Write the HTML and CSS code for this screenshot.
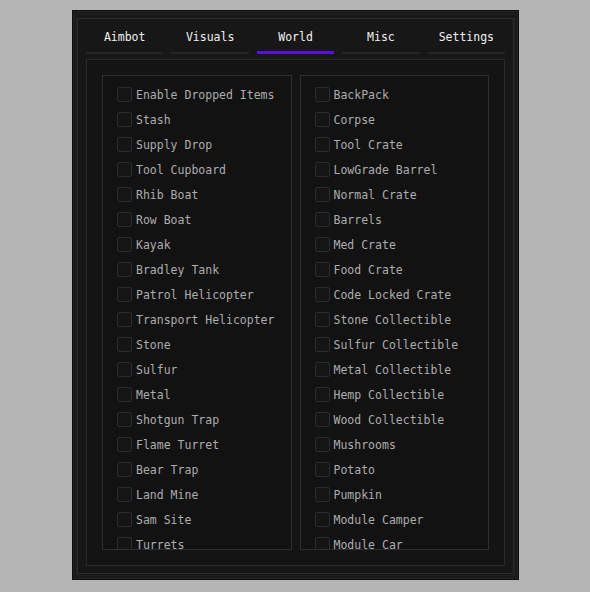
FILE: index.html
```html
<!DOCTYPE html>
<html>
<head>
<meta charset="utf-8">
<link rel="stylesheet" href="styles.css">
</head>
<body>
<div class="window">
  <div class="frame">
    <div class="tabs">
      <div class="tab">Aimbot</div>
      <div class="tab">Visuals</div>
      <div class="tab active">World</div>
      <div class="tab">Misc</div>
      <div class="tab">Settings</div>
    </div>
    <div class="content">
      <div class="group">
        <div class="item"><span class="box"></span><span>Enable Dropped Items</span></div>
        <div class="item"><span class="box"></span><span>Stash</span></div>
        <div class="item"><span class="box"></span><span>Supply Drop</span></div>
        <div class="item"><span class="box"></span><span>Tool Cupboard</span></div>
        <div class="item"><span class="box"></span><span>Rhib Boat</span></div>
        <div class="item"><span class="box"></span><span>Row Boat</span></div>
        <div class="item"><span class="box"></span><span>Kayak</span></div>
        <div class="item"><span class="box"></span><span>Bradley Tank</span></div>
        <div class="item"><span class="box"></span><span>Patrol Helicopter</span></div>
        <div class="item"><span class="box"></span><span>Transport Helicopter</span></div>
        <div class="item"><span class="box"></span><span>Stone</span></div>
        <div class="item"><span class="box"></span><span>Sulfur</span></div>
        <div class="item"><span class="box"></span><span>Metal</span></div>
        <div class="item"><span class="box"></span><span>Shotgun Trap</span></div>
        <div class="item"><span class="box"></span><span>Flame Turret</span></div>
        <div class="item"><span class="box"></span><span>Bear Trap</span></div>
        <div class="item"><span class="box"></span><span>Land Mine</span></div>
        <div class="item"><span class="box"></span><span>Sam Site</span></div>
        <div class="item"><span class="box"></span><span>Turrets</span></div>
      </div>
      <div class="group">
        <div class="item"><span class="box"></span><span>BackPack</span></div>
        <div class="item"><span class="box"></span><span>Corpse</span></div>
        <div class="item"><span class="box"></span><span>Tool Crate</span></div>
        <div class="item"><span class="box"></span><span>LowGrade Barrel</span></div>
        <div class="item"><span class="box"></span><span>Normal Crate</span></div>
        <div class="item"><span class="box"></span><span>Barrels</span></div>
        <div class="item"><span class="box"></span><span>Med Crate</span></div>
        <div class="item"><span class="box"></span><span>Food Crate</span></div>
        <div class="item"><span class="box"></span><span>Code Locked Crate</span></div>
        <div class="item"><span class="box"></span><span>Stone Collectible</span></div>
        <div class="item"><span class="box"></span><span>Sulfur Collectible</span></div>
        <div class="item"><span class="box"></span><span>Metal Collectible</span></div>
        <div class="item"><span class="box"></span><span>Hemp Collectible</span></div>
        <div class="item"><span class="box"></span><span>Wood Collectible</span></div>
        <div class="item"><span class="box"></span><span>Mushrooms</span></div>
        <div class="item"><span class="box"></span><span>Potato</span></div>
        <div class="item"><span class="box"></span><span>Pumpkin</span></div>
        <div class="item"><span class="box"></span><span>Module Camper</span></div>
        <div class="item"><span class="box"></span><span>Module Car</span></div>
      </div>
    </div>
  </div>
</div>
</body>
</html>
```
FILE: styles.css
```css
html, body {
  margin: 0;
  padding: 0;
  background: #b4b4b4;
}
body {
  font-family: "DejaVu Sans Mono", "Liberation Mono", monospace;
  font-size: 11.5px;
}
.window {
  box-sizing: border-box;
  margin: 10px 0 0 72px;
  width: 447px;
  height: 570px;
  background: #171717;
  border: 1px solid #0e0e0e;
  box-shadow: inset 0 0 0 1px #222222, inset 0 0 0 3px #1a1a1a, inset 0 0 0 4px #202020;
  padding: 7px 4px 5px 4px;
}
.frame {
  box-sizing: border-box;
  height: 100%;
  border: 1px solid #2b2b2b;
  padding: 0 8px 7px 8px;
  display: flex;
  flex-direction: column;
  gap: 5px;
}
.tabs {
  display: flex;
  gap: 8px;
  height: 35px;
}
.tab {
  flex: 1;
  box-sizing: border-box;
  height: 35px;
  padding-top: 10px;
  line-height: 16px;
  text-align: center;
  color: #f0f0f0;
  border-bottom: 2px solid #252525;
}
.tab.active {
  border-bottom: 3px solid #5a10dc;
}
.content {
  flex: 1;
  box-sizing: border-box;
  border: 1px solid #2a2a2a;
  background: #141414;
  padding: 15px;
  display: grid;
  grid-template-columns: 1fr 1fr;
  gap: 8px;
  min-height: 0;
}
.group {
  box-sizing: border-box;
  border: 1px solid #2e2e2e;
  background: #121212;
  padding: 6px 0 0 14px;
  overflow: hidden;
  min-height: 0;
}
.item {
  display: flex;
  align-items: center;
  gap: 4px;
  height: 25px;
  color: #adadad;
  white-space: nowrap;
}
.box {
  box-sizing: border-box;
  width: 15px;
  height: 15px;
  border: 1px solid #2c2c2c;
  border-radius: 2px;
  background: #151515;
  flex: none;
}
```
